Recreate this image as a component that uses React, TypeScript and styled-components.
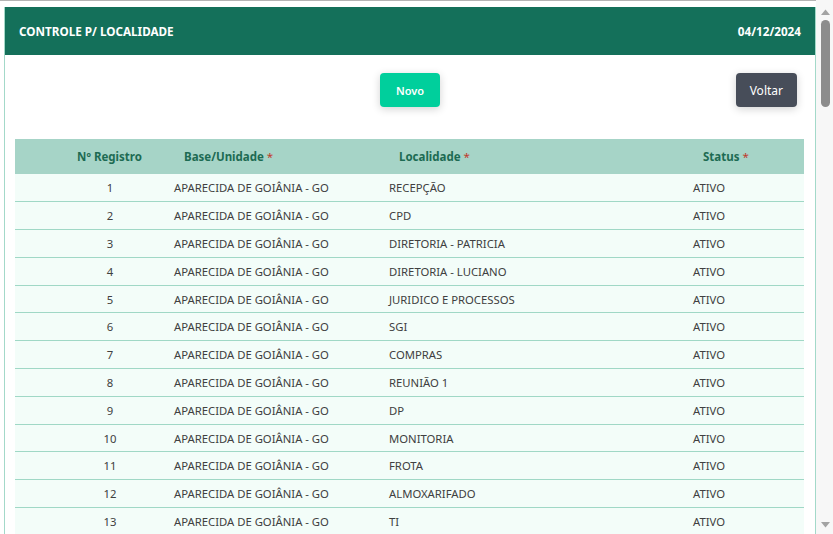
import React from "react";
import styled, { createGlobalStyle } from "styled-components";

const GlobalStyle = createGlobalStyle`
  html, body { margin: 0; padding: 0; background: #ffffff; overflow: hidden; }
  body { font-family: "Noto Sans", "Open Sans", sans-serif; color: #333; }
  * { box-sizing: border-box; }
`;

const Shell = styled.div`
  display: flex;
  height: 100vh;
  overflow: hidden;
`;

const Main = styled.main`
  flex: 1;
  min-width: 0;
  overflow: hidden;
  border-top: 1px solid #b4b4b4;
  padding: 6px 0 0 4px;
`;

const ScrollRail = styled.div`
  width: 17px;
  flex: none;
  background: #f7f7f7;
  display: flex;
  flex-direction: column;
  align-items: center;
  padding: 9px 0 6px 2px;
`;

const Thumb = styled.div`
  width: 9px;
  height: 87px;
  margin-top: 5px;
  border-radius: 5px;
  background: #8c8c8c;
`;

const RailSpacer = styled.div`
  flex: 1;
`;

const Panel = styled.section`
  border: 1px solid #a3d9c9;
  border-top: none;
  background: #fff;
`;

const Header = styled.header`
  height: 48px;
  background: #14705a;
  color: #fff;
  display: flex;
  align-items: center;
  justify-content: space-between;
  padding: 0 14px 0 14px;
  font-size: 11.7px;
  font-weight: 700;
`;

const Toolbar = styled.div`
  display: grid;
  grid-template-columns: 1fr auto 1fr;
  align-items: center;
  padding: 18px 18px 0 18px;
  height: 52px;
`;

const Button = styled.button<{ $variant: "primary" | "dark" }>`
  grid-column: ${(p) => (p.$variant === "primary" ? 2 : 3)};
  justify-self: ${(p) => (p.$variant === "primary" ? "center" : "end")};
  height: 34px;
  border: none;
  border-radius: 4px;
  color: #fff;
  font-family: inherit;
  font-size: ${(p) => (p.$variant === "primary" ? "11px" : "12px")};
  font-weight: ${(p) => (p.$variant === "primary" ? 600 : 400)};
  padding: 0 ${(p) => (p.$variant === "primary" ? "15.5px" : "14px")};
  background: ${(p) => (p.$variant === "primary" ? "#00cf9c" : "#474d59")};
  box-shadow: 0 2px 8px rgba(0, 0, 0, 0.18);
  cursor: pointer;
`;

const TableWrap = styled.div`
  padding: 32px 11px 0 10px;
`;

const Table = styled.table`
  width: 100%;
  border-collapse: collapse;
  table-layout: fixed;
  font-size: 11.3px;
`;

const Th = styled.th<{ $center?: boolean }>`
  height: 35px;
  padding-top: 1px;
  background: #a6d4c7;
  color: #1d6b53;
  font-size: 11.5px;
  font-weight: 700;
  text-align: ${(p) => (p.$center ? "center" : "left")};
  padding-left: ${(p) => (p.$center ? "41px" : "20px")};
`;

const Required = styled.span`
  color: #c0392b;
  font-weight: 400;
`;

const Row = styled.tr`
  background: #f3fdf9;
  border-bottom: 1px solid #a0d8c6;
`;

const Td = styled.td<{ $center?: boolean }>`
  height: 27.8px;
  padding: ${(p) => (p.$center ? "0 0 0 41px" : "0 0 0 10px")};
  text-align: ${(p) => (p.$center ? "center" : "left")};
  color: #404040;
  white-space: nowrap;
  overflow: hidden;
`;

const rows = [
  "RECEPÇÃO",
  "CPD",
  "DIRETORIA - PATRICIA",
  "DIRETORIA - LUCIANO",
  "JURIDICO E PROCESSOS",
  "SGI",
  "COMPRAS",
  "REUNIÃO 1",
  "DP",
  "MONITORIA",
  "FROTA",
  "ALMOXARIFADO",
  "TI",
].map((local, i) => ({
  id: i + 1,
  base: "APARECIDA DE GOIÂNIA - GO",
  local,
  status: "ATIVO",
}));

const ArrowUp = () => (
  <svg width="9" height="6" viewBox="0 0 9 6">
    <path d="M0 6 L4.5 0.5 L9 6 Z" fill="#a3a3a3" />
  </svg>
);

const ArrowDown = () => (
  <svg width="9" height="6" viewBox="0 0 9 6">
    <path d="M0 0 L4.5 5.5 L9 0 Z" fill="#a3a3a3" />
  </svg>
);

export default function App() {
  return (
    <>
      <GlobalStyle />
      <Shell>
        <Main>
          <Panel>
            <Header>
              <span>CONTROLE P/ LOCALIDADE</span>
              <span>04/12/2024</span>
            </Header>
            <Toolbar>
              <Button $variant="primary">Novo</Button>
              <Button $variant="dark">Voltar</Button>
            </Toolbar>
            <TableWrap>
              <Table>
                <colgroup>
                  <col style={{ width: 149 }} />
                  <col style={{ width: 215 }} />
                  <col style={{ width: 304 }} />
                  <col />
                </colgroup>
                <thead>
                  <tr>
                    <Th $center>Nº Registro</Th>
                    <Th>
                      Base/Unidade <Required>*</Required>
                    </Th>
                    <Th>
                      Localidade <Required>*</Required>
                    </Th>
                    <Th>
                      Status <Required>*</Required>
                    </Th>
                  </tr>
                </thead>
                <tbody>
                  {rows.map((r) => (
                    <Row key={r.id}>
                      <Td $center>{r.id}</Td>
                      <Td>{r.base}</Td>
                      <Td>{r.local}</Td>
                      <Td>{r.status}</Td>
                    </Row>
                  ))}
                </tbody>
              </Table>
            </TableWrap>
          </Panel>
        </Main>
        <ScrollRail aria-hidden>
          <ArrowUp />
          <Thumb />
          <RailSpacer />
          <ArrowDown />
        </ScrollRail>
      </Shell>
    </>
  );
}
